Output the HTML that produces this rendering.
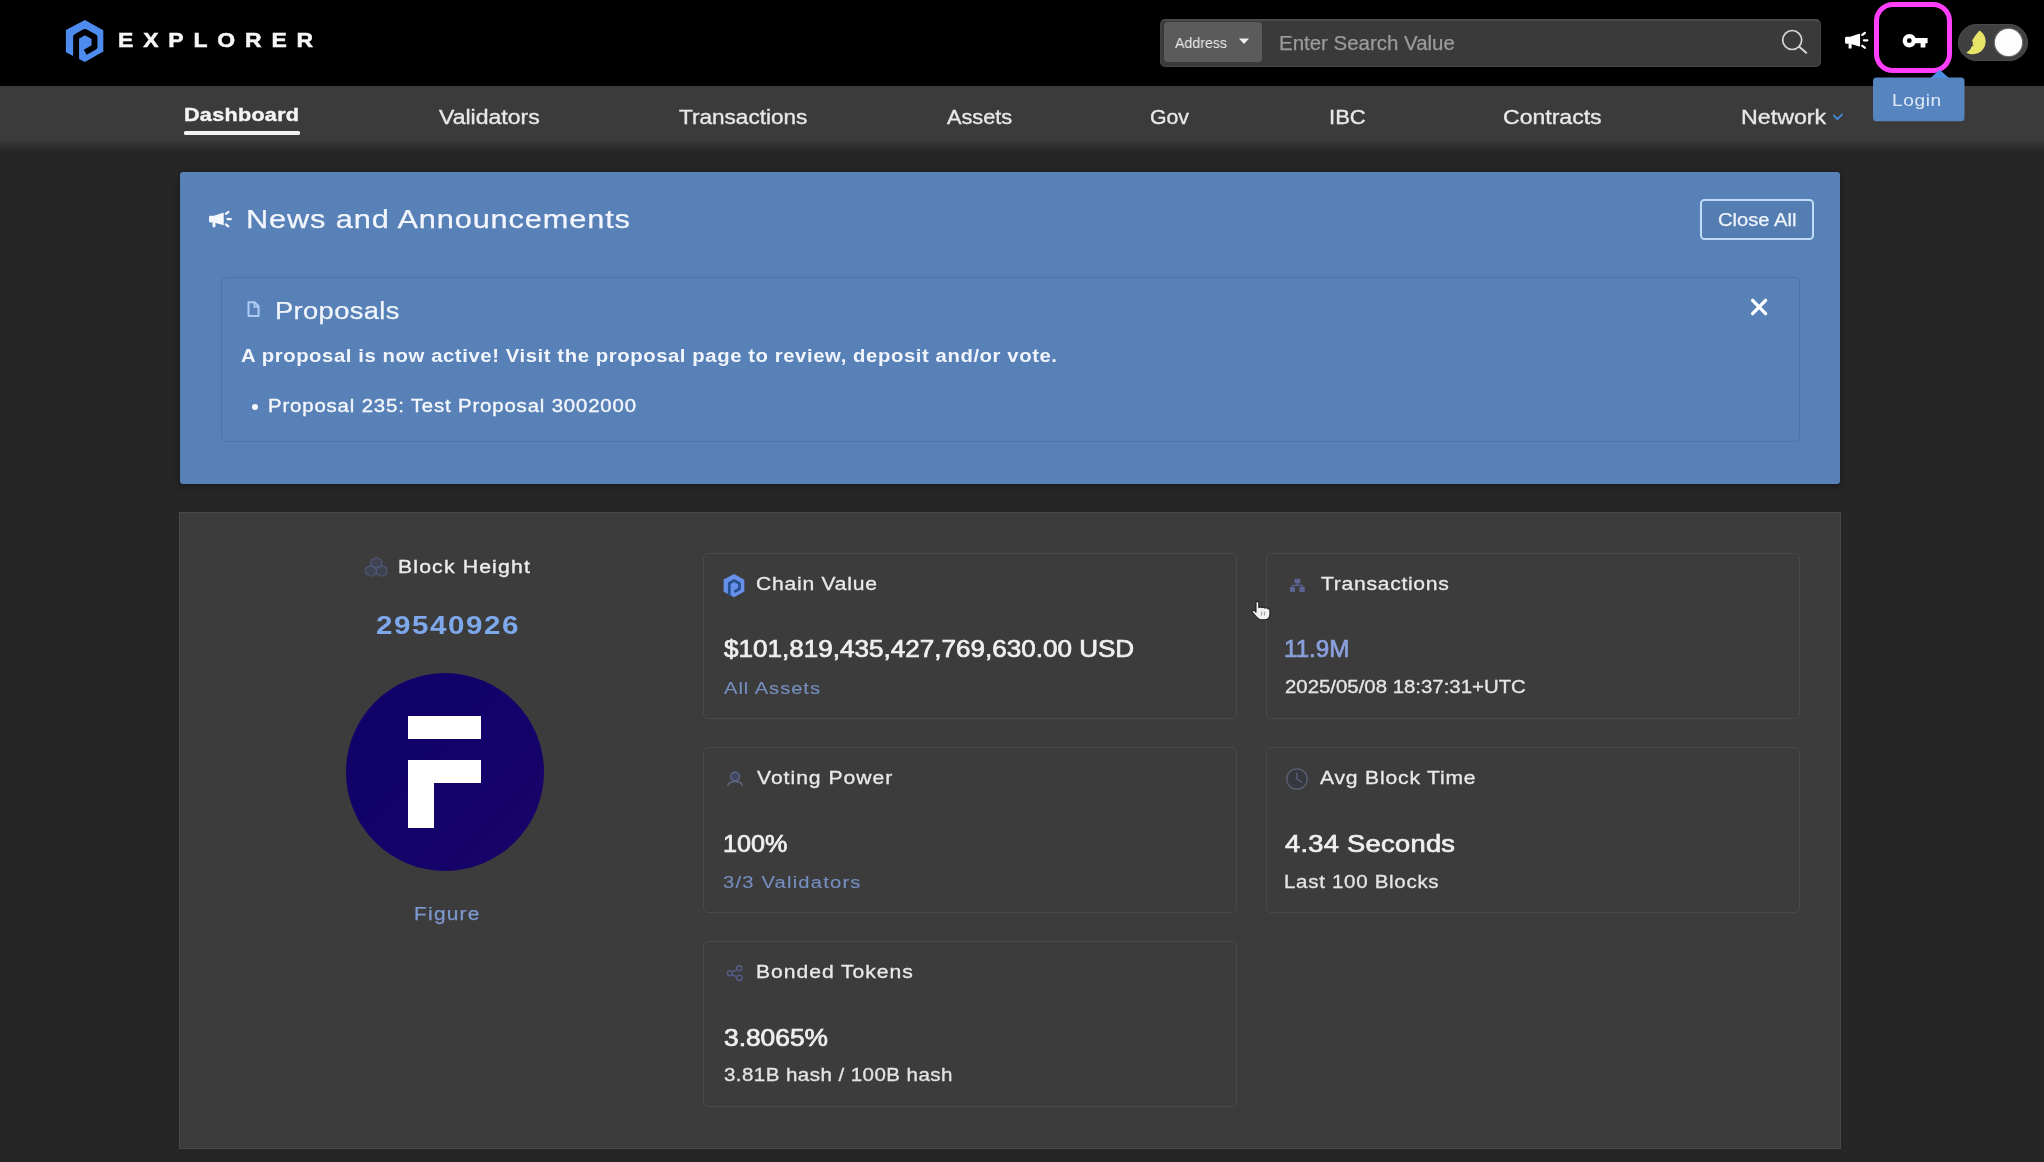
<!DOCTYPE html>
<html><head><meta charset="utf-8"><title>Explorer</title>
<style>
html,body{margin:0;padding:0}
body{width:2044px;height:1162px;overflow:hidden;background:#262626;position:relative;font-family:"Liberation Sans",sans-serif}
.a{position:absolute;box-sizing:border-box}
.t{will-change:transform;position:absolute;white-space:pre;transform-origin:0 50%;font-family:"Liberation Sans",sans-serif}
.card{position:absolute;box-sizing:border-box;border:1.2px solid #494949;border-radius:5px}
svg{position:absolute;overflow:visible}

</style></head>
<body>
<!-- top bar -->
<div class="a" style="left:0;top:0;width:2044px;height:86px;background:#000"></div>
<!-- nav bar -->
<div class="a" style="left:0;top:86px;width:2044px;height:54px;background:#3b3b3b"></div>
<div class="a" style="left:0;top:140px;width:2044px;height:12px;background:linear-gradient(#3b3b3b,#343434 30%,#2a2a2a 70%,#262626)"></div>
<div class="a" style="left:184.3px;top:131.3px;width:116px;height:3.5px;background:#f2f2f2;border-radius:1.5px"></div>
<!-- search -->
<div class="a" style="left:1160px;top:19px;width:661px;height:47.5px;background:#3a3a3a;border-radius:5px;border:1px solid #444;border-top:2px solid #4b4b4b"></div>
<div class="a" style="left:1164px;top:22px;width:98px;height:39.5px;background:#5b5b5b;border-radius:4px"></div>
<!-- announcement -->
<div class="a" style="left:180px;top:172px;width:1660px;height:312px;background:#5881b7;border-radius:3px;box-shadow:0 2px 6px rgba(0,0,0,.4)"></div>
<div class="a" style="left:220.5px;top:276.8px;width:1579px;height:165.6px;border:1.5px solid #5273a6;border-radius:5px"></div>
<div class="a" style="left:1700.4px;top:199px;width:113.4px;height:41px;border:2.3px solid #bfdbf5;border-radius:4.5px;background:#547eb1"></div>
<!-- dashboard panel -->
<div class="a" style="left:179px;top:512px;width:1662px;height:636.5px;background:#3c3c3c;border:1px solid #484848"></div>
<div class="card" style="left:702.5px;top:552.5px;width:534.5px;height:166px"></div>
<div class="card" style="left:1265.5px;top:552.5px;width:534.5px;height:166px"></div>
<div class="card" style="left:702.5px;top:746.5px;width:534.5px;height:166px"></div>
<div class="card" style="left:1265.5px;top:746.5px;width:534.5px;height:166px"></div>
<div class="card" style="left:702.5px;top:940.5px;width:534.5px;height:166px"></div>
<!-- Figure logo -->
<div class="a" style="left:345.5px;top:672.5px;width:198px;height:198px;border-radius:50%;background:linear-gradient(135deg,#11026a 40%,#1a0468)"></div>
<div class="a" style="left:408px;top:716px;width:73px;height:23px;background:#fff"></div>
<div class="a" style="left:408px;top:759.5px;width:73px;height:23px;background:#fff"></div>
<div class="a" style="left:408px;top:759.5px;width:25.5px;height:68.5px;background:#fff"></div>
<!-- ===== ICONS ===== -->
<svg width="0" height="0" style="left:0;top:0">
  <defs>
    <g id="plogo">
      <polygon points="84.9,20.1 103.3,30.3 103.3,51.6 84.9,62 65.9,52.2 65.9,29.9"/>
    </g>
    <g id="mega">
      <path stroke-width="0" d="M0 6.3 Q0 4.8 1.5 4.8 L5 4.8 L14.3 1.7 Q15.1 1.5 15.1 2.4 L15.1 13.8 Q15.1 14.7 14.3 14.4 L5 11.8 L1.5 11.8 Q0 11.8 0 10.3 Z"/>
      <path stroke-width="0" d="M3.6 11.6 L6.6 11.6 L6.6 15.9 Q6.6 16.6 5.9 16.6 L4.3 16.6 Q3.6 16.6 3.6 15.9 Z"/>
      <path d="M17.3 2.9 L19.8 1 M18.9 8.3 L22.4 8.3 M17.3 13.8 L19.8 15.7" stroke-width="2.3" stroke-linecap="round" fill="none"/>
    </g>
  </defs>
</svg>
<!-- main logo -->
<svg style="left:0;top:0" width="130" height="86" viewBox="0 0 130 86">
  <use href="#plogo" fill="#4e8bee"/>
  <polyline points="76.1,59.6 76.1,36.8 84.9,31.9 94.5,37.2 94.5,47 85.2,52.2" fill="none" stroke="#000" stroke-width="5.9" stroke-linejoin="round"/>
</svg>
<!-- small logo on chain value -->
<svg style="left:723px;top:573.6px" width="22" height="23.2" viewBox="65.9 20.1 37.4 41.9">
  <use href="#plogo" fill="#6690ea"/>
  <polyline points="76.1,59.6 76.1,36.8 84.9,31.9 94.5,37.2 94.5,47 85.2,52.2" fill="none" stroke="#27508f" stroke-width="5" stroke-linejoin="round"/>
</svg>
<!-- search icon -->
<svg style="left:1775px;top:24px" width="40" height="40" viewBox="1775 24 40 40">
  <circle cx="1792.2" cy="40" r="9.5" fill="none" stroke="#d6d6d6" stroke-width="1.7"/>
  <line x1="1799.2" y1="46.8" x2="1806.2" y2="52.8" stroke="#d6d6d6" stroke-width="2" stroke-linecap="round"/>
</svg>
<!-- Address caret -->
<svg style="left:1238px;top:37px" width="12" height="8" viewBox="0 0 12 8"><path d="M1 1.6 L11 1.6 L6 7 Z" fill="#f0f0f0"/></svg>
<!-- megaphone top -->
<svg style="left:1845.3px;top:32.4px" width="24" height="18" viewBox="0 0 24 18"><use href="#mega" fill="#fff" stroke="#fff"/></svg>
<!-- megaphone announcement -->
<svg style="left:209px;top:211.2px" width="24" height="18" viewBox="0 0 24.6 18.4"><use href="#mega" fill="#f4f7fd" stroke="#f4f7fd"/></svg>
<!-- login tooltip -->
<svg style="left:1860px;top:60px" width="120" height="70" viewBox="1860 60 120 70">
  <rect x="1873" y="77.6" width="91.5" height="43.6" rx="3.5" fill="#5584be"/>
</svg>
<!-- magenta highlight box -->
<div class="a" style="left:1874.4px;top:1.8px;width:78px;height:71px;border:5px solid #ff3ffb;border-radius:19px;background:#000"></div>
<svg style="left:1925px;top:64px" width="30" height="16" viewBox="1925 64 30 16">
  <path d="M1930.5 78 L1939.6 69.8 L1949 78 Z" fill="#4b8de0"/>
</svg>
<!-- key icon -->
<svg style="left:1900px;top:30px" width="32" height="22" viewBox="1900 30 32 22">
  <path fill-rule="evenodd" fill="#fff" d="M1909.3 34 a6.7 6.7 0 1 0 0.001 13.4 a6.7 6.7 0 0 0 6.2 -4.1 L1920.6 43.3 L1920.6 47.4 L1925.4 47.4 L1925.4 43.3 L1927.6 43.3 L1927.6 38.1 L1915.5 38.1 a6.7 6.7 0 0 0 -6.2 -4.1 Z M1909.3 38.3 a2.4 2.4 0 1 1 -0.001 4.8 a2.4 2.4 0 0 1 0.001 -4.8 Z"/>
</svg>
<!-- theme toggle -->
<div class="a" style="left:1958.3px;top:23.8px;width:69.4px;height:37px;border-radius:18.5px;background:#404040;border:1.5px solid #4c4c4c"></div>
<div class="a" style="left:1994.6px;top:28.6px;width:27.6px;height:27.6px;border-radius:50%;background:#fdfdfd;box-shadow:0 0 2px #fff"></div>
<svg style="left:1960px;top:26px" width="34" height="34" viewBox="1960 26 34 34">
  <path d="M1979.4 30.4 A12.5 12.5 0 1 1 1966.2 52.4 Q1970.6 50.6 1971.6 46.6 L1973.6 45.6 L1972.4 44.2 L1973 42.4 L1972 40.6 Q1975.2 35 1979.4 30.4 Z" fill="#e8e468"/>
</svg>
<!-- network chevron -->
<svg style="left:1830px;top:110px" width="16" height="14" viewBox="1830 110 16 14">
  <path d="M1833.8 115.4 L1837.4 119.2 L1842 114.6" fill="none" stroke="#4687d6" stroke-width="1.9" stroke-linecap="round" stroke-linejoin="round"/>
</svg>
<!-- doc icon -->
<svg style="left:245px;top:299px" width="18" height="22" viewBox="245 299 18 22">
  <path d="M249.6 302.3 L254.8 302.3 L258.6 306.3 L258.6 316 L248.5 316 L248.5 302.3 Z" fill="none" stroke="#aecbf4" stroke-width="2" stroke-linejoin="round"/>
  <path d="M254.4 302.6 L254.4 306.8 L258.4 306.8" fill="none" stroke="#aecbf4" stroke-width="1.8"/>
</svg>
<!-- X close -->
<svg style="left:1748px;top:296px" width="22" height="22" viewBox="1748 296 22 22">
  <path d="M1752.6 300.4 L1765.6 313.6 M1765.6 300.4 L1752.6 313.6" stroke="#fbfdff" stroke-width="3.4" stroke-linecap="round"/>
</svg>
<!-- bullet -->
<div class="a" style="left:251.5px;top:403.6px;width:6px;height:6px;border-radius:50%;background:#f4f7fc"></div>
<!-- block height cubes icon -->
<svg style="left:362px;top:554px;opacity:.5" width="30" height="26" viewBox="362 554 30 26">
  <g fill="rgba(80,100,175,.35)" stroke="#6074b4" stroke-width="1.2" stroke-linejoin="round" transform="translate(376.3 567) scale(.9) translate(-376.3 -567)">
    <polygon points="376.3,556.6 382.3,559.6 382.3,566 376.3,569 370.3,566 370.3,559.6"/>
    <polygon points="370.6,565 376.6,568 376.6,574.4 370.6,577.4 364.6,574.4 364.6,568"/>
    <polygon points="382,565 388,568 388,574.4 382,577.4 376,574.4 376,568"/>
  </g>
</svg>
<!-- transactions icon -->
<svg style="left:1286px;top:574px;opacity:.7" width="24" height="22" viewBox="1286 574 24 22">
  <g fill="#6a74b8">
    <rect x="1294.4" y="578.8" width="6" height="4.4" rx=".8"/>
    <rect x="1290" y="587" width="5" height="5" rx=".8"/>
    <rect x="1299.4" y="587" width="5.4" height="5" rx=".8"/>
  </g>
  <path d="M1297.4 583 L1297.4 585.4 M1292.4 587.4 L1292.4 585.4 L1302.2 585.4 L1302.2 587.4" fill="none" stroke="#6a74b8" stroke-width="1.4"/>
</svg>
<!-- voting power icon -->
<svg style="left:724px;top:768px;opacity:.6" width="24" height="22" viewBox="724 768 24 22">
  <circle cx="735.1" cy="776.6" r="4.3" fill="rgba(70,85,150,.6)" stroke="#7582b4" stroke-width="1.5"/>
  <path d="M727.8 785.6 Q729 781.6 735.1 781.6 Q741.2 781.6 742.4 785.6" fill="none" stroke="#7582b4" stroke-width="1.5" stroke-linecap="round"/>
</svg>
<!-- clock icon -->
<svg style="left:1284px;top:766px;opacity:.8" width="26" height="26" viewBox="1284 766 26 26">
  <circle cx="1297" cy="779" r="10.2" fill="rgba(44,50,70,.45)" stroke="#61677f" stroke-width="1.35"/>
  <path d="M1296.7 773.4 L1296.9 779.2 L1301.5 781.8" fill="none" stroke="#5c6684" stroke-width="1.5" stroke-linecap="round" stroke-linejoin="round"/>
</svg>
<!-- bonded tokens icon -->
<svg style="left:724px;top:962px;opacity:.65" width="24" height="22" viewBox="724 962 24 22">
  <g fill="none" stroke="#636eb0" stroke-width="1.4">
    <path d="M732 972.2 L737.2 969.3 M732 974.6 L737.2 977"/>
    <circle cx="729.9" cy="973.3" r="2.5"/>
    <circle cx="739.3" cy="968.2" r="2.5"/>
    <circle cx="739.3" cy="977.8" r="2.7"/>
  </g>
</svg>
<!-- mouse cursor (hand) -->
<svg style="left:1248px;top:598px" width="26" height="26" viewBox="1248 598 26 26">
  <path d="M1256 612.2 L1256 603 Q1256 601.4 1257.4 601.4 Q1258.8 601.4 1258.8 603 L1258.8 607.6 Q1260.3 606.3 1261.8 607.7 Q1263.4 606.6 1264.8 608.1 Q1266.4 607.2 1267.8 608.6 Q1269.9 608.6 1269.9 610.6 L1269.9 614.6 Q1269.6 619.4 1265.4 619.7 L1260.6 619.7 Q1258.2 619.3 1256.6 617.2 L1252.4 612.4 Q1251.5 610.8 1253 610.2 Q1254.6 610.2 1256 612.2 Z" fill="#f2f2f2" stroke="#222" stroke-width="1.1" stroke-linejoin="round"/>
  <path d="M1261.6 611.5 L1261.6 615.5 M1264.4 611.5 L1264.4 615.5" stroke="#9a9a9a" stroke-width="1"/>
</svg>

<span class="t" style="left:117.6px;top:30.2px;font-size:20.5px;line-height:20.5px;font-weight:700;color:#f6f6f6;letter-spacing:8.786px;transform:scaleX(1.1200);-webkit-text-stroke:0.5px #f6f6f6;">EXPLORER</span>
<span class="t" style="left:1175.0px;top:35.1px;font-size:15px;line-height:15px;font-weight:400;color:#ececec;letter-spacing:0.000px;transform:scaleX(0.9449);">Address</span>
<span class="t" style="left:1279.2px;top:32.9px;font-size:20px;line-height:20px;font-weight:400;color:#9b9b9b;letter-spacing:0.000px;transform:scaleX(1.0224);-webkit-text-stroke:0.25px #9b9b9b;">Enter Search Value</span>
<span class="t" style="left:1892.4px;top:92.2px;font-size:16.5px;line-height:16.5px;font-weight:400;color:#dde7f7;letter-spacing:0.510px;transform:scaleX(1.1600);">Login</span>
<span class="t" style="left:184.2px;top:106.4px;font-size:18.6px;line-height:18.6px;font-weight:700;color:#f4f4f4;letter-spacing:0.252px;transform:scaleX(1.1600);-webkit-text-stroke:0.4px #f4f4f4;">Dashboard</span>
<span class="t" style="left:438.6px;top:106.8px;font-size:20.5px;line-height:20.5px;font-weight:400;color:#e8e8e8;letter-spacing:-0.000px;transform:scaleX(1.1245);-webkit-text-stroke:0.35px #e8e8e8;">Validators</span>
<span class="t" style="left:679.2px;top:106.8px;font-size:20.5px;line-height:20.5px;font-weight:400;color:#e8e8e8;letter-spacing:0.000px;transform:scaleX(1.1013);-webkit-text-stroke:0.35px #e8e8e8;">Transactions</span>
<span class="t" style="left:946.8px;top:106.8px;font-size:20.5px;line-height:20.5px;font-weight:400;color:#e8e8e8;letter-spacing:-0.000px;transform:scaleX(1.0596);-webkit-text-stroke:0.35px #e8e8e8;">Assets</span>
<span class="t" style="left:1150.0px;top:106.8px;font-size:20.5px;line-height:20.5px;font-weight:400;color:#e8e8e8;letter-spacing:0.000px;transform:scaleX(1.0370);-webkit-text-stroke:0.35px #e8e8e8;">Gov</span>
<span class="t" style="left:1328.6px;top:106.8px;font-size:20.5px;line-height:20.5px;font-weight:400;color:#e8e8e8;letter-spacing:0.000px;transform:scaleX(1.0764);-webkit-text-stroke:0.35px #e8e8e8;">IBC</span>
<span class="t" style="left:1503.0px;top:106.8px;font-size:20.5px;line-height:20.5px;font-weight:400;color:#e8e8e8;letter-spacing:0.000px;transform:scaleX(1.1238);-webkit-text-stroke:0.35px #e8e8e8;">Contracts</span>
<span class="t" style="left:1740.6px;top:106.8px;font-size:20.5px;line-height:20.5px;font-weight:400;color:#e8e8e8;letter-spacing:0.000px;transform:scaleX(1.1332);-webkit-text-stroke:0.35px #e8e8e8;">Network</span>
<span class="t" style="left:246.0px;top:206.4px;font-size:26.5px;line-height:26.5px;font-weight:400;color:#f3f6fc;letter-spacing:0.751px;transform:scaleX(1.1600);-webkit-text-stroke:0.25px #f3f6fc;">News and Announcements</span>
<span class="t" style="left:1717.6px;top:210.5px;font-size:18.7px;line-height:18.7px;font-weight:400;color:#eef3fb;letter-spacing:0.000px;transform:scaleX(1.0781);-webkit-text-stroke:0.25px #eef3fb;">Close All</span>
<span class="t" style="left:274.6px;top:299.7px;font-size:23.5px;line-height:23.5px;font-weight:400;color:#f1f5fb;letter-spacing:0.343px;transform:scaleX(1.1600);-webkit-text-stroke:0.25px #f1f5fb;">Proposals</span>
<span class="t" style="left:241.0px;top:347.9px;font-size:17.5px;line-height:17.5px;font-weight:700;color:#f1f5fb;letter-spacing:0.499px;transform:scaleX(1.1600);">A proposal is now active! Visit the proposal page to review, deposit and/or vote.</span>
<span class="t" style="left:268.0px;top:397.6px;font-size:17.5px;line-height:17.5px;font-weight:400;color:#f4f7fc;letter-spacing:0.755px;transform:scaleX(1.1600);-webkit-text-stroke:0.35px #f4f7fc;">Proposal 235: Test Proposal 3002000</span>
<span class="t" style="left:398.0px;top:557.7px;font-size:18.3px;line-height:18.3px;font-weight:400;color:#ececec;letter-spacing:0.998px;transform:scaleX(1.1600);-webkit-text-stroke:0.35px #ececec;">Block Height</span>
<span class="t" style="left:376.0px;top:612.7px;font-size:25.5px;line-height:25.5px;font-weight:700;color:#7ea8ec;letter-spacing:1.327px;transform:scaleX(1.1600);">29540926</span>
<span class="t" style="left:414.0px;top:904.6px;font-size:18px;line-height:18px;font-weight:400;color:#7d98d0;letter-spacing:1.070px;transform:scaleX(1.1600);-webkit-text-stroke:0.25px #7d98d0;">Figure</span>
<span class="t" style="left:756.2px;top:575.3px;font-size:18.2px;line-height:18.2px;font-weight:400;color:#e9e9e9;letter-spacing:0.656px;transform:scaleX(1.1600);-webkit-text-stroke:0.3px #e9e9e9;">Chain Value</span>
<span class="t" style="left:723.6px;top:638.0px;font-size:23.5px;line-height:23.5px;font-weight:400;color:#f0f0f0;letter-spacing:0.000px;transform:scaleX(1.1093);-webkit-text-stroke:0.7px #f0f0f0;">$101,819,435,427,769,630.00 USD</span>
<span class="t" style="left:723.6px;top:679.5px;font-size:17.4px;line-height:17.4px;font-weight:400;color:#768fc0;letter-spacing:0.819px;transform:scaleX(1.1600);-webkit-text-stroke:0.1px #768fc0;">All Assets</span>
<span class="t" style="left:1320.8px;top:575.3px;font-size:18.2px;line-height:18.2px;font-weight:400;color:#e9e9e9;letter-spacing:0.611px;transform:scaleX(1.1600);-webkit-text-stroke:0.3px #e9e9e9;">Transactions</span>
<span class="t" style="left:1284.2px;top:638.0px;font-size:23.5px;line-height:23.5px;font-weight:400;color:#8aa0dc;letter-spacing:0.000px;transform:scaleX(1.0287);-webkit-text-stroke:0.7px #8aa0dc;">11.9M</span>
<span class="t" style="left:1285.2px;top:679.4px;font-size:17.7px;line-height:17.7px;font-weight:400;color:#e4e4e4;letter-spacing:0.000px;transform:scaleX(1.1523);-webkit-text-stroke:0.3px #e4e4e4;">2025/05/08 18:37:31+UTC</span>
<span class="t" style="left:757.2px;top:768.5px;font-size:18.2px;line-height:18.2px;font-weight:400;color:#e9e9e9;letter-spacing:0.853px;transform:scaleX(1.1600);-webkit-text-stroke:0.3px #e9e9e9;">Voting Power</span>
<span class="t" style="left:722.6px;top:832.5px;font-size:23.5px;line-height:23.5px;font-weight:400;color:#f0f0f0;letter-spacing:0.000px;transform:scaleX(1.0714);-webkit-text-stroke:0.7px #f0f0f0;">100%</span>
<span class="t" style="left:722.6px;top:873.7px;font-size:17.4px;line-height:17.4px;font-weight:400;color:#768fc0;letter-spacing:1.030px;transform:scaleX(1.1600);-webkit-text-stroke:0.1px #768fc0;">3/3 Validators</span>
<span class="t" style="left:1320.0px;top:768.5px;font-size:18.2px;line-height:18.2px;font-weight:400;color:#e9e9e9;letter-spacing:0.702px;transform:scaleX(1.1600);-webkit-text-stroke:0.3px #e9e9e9;">Avg Block Time</span>
<span class="t" style="left:1285.2px;top:832.5px;font-size:23.5px;line-height:23.5px;font-weight:400;color:#f0f0f0;letter-spacing:0.256px;transform:scaleX(1.1600);-webkit-text-stroke:0.7px #f0f0f0;">4.34 Seconds</span>
<span class="t" style="left:1284.2px;top:873.6px;font-size:17.7px;line-height:17.7px;font-weight:400;color:#e4e4e4;letter-spacing:0.600px;transform:scaleX(1.1600);-webkit-text-stroke:0.3px #e4e4e4;">Last 100 Blocks</span>
<span class="t" style="left:756.2px;top:963.3px;font-size:18.2px;line-height:18.2px;font-weight:400;color:#e9e9e9;letter-spacing:0.842px;transform:scaleX(1.1600);-webkit-text-stroke:0.3px #e9e9e9;">Bonded Tokens</span>
<span class="t" style="left:723.6px;top:1027.0px;font-size:23.5px;line-height:23.5px;font-weight:400;color:#f0f0f0;letter-spacing:0.000px;transform:scaleX(1.1209);-webkit-text-stroke:0.7px #f0f0f0;">3.8065%</span>
<span class="t" style="left:723.6px;top:1067.1px;font-size:17.7px;line-height:17.7px;font-weight:400;color:#e4e4e4;letter-spacing:0.385px;transform:scaleX(1.1600);-webkit-text-stroke:0.3px #e4e4e4;">3.81B hash / 100B hash</span>
</body></html>
